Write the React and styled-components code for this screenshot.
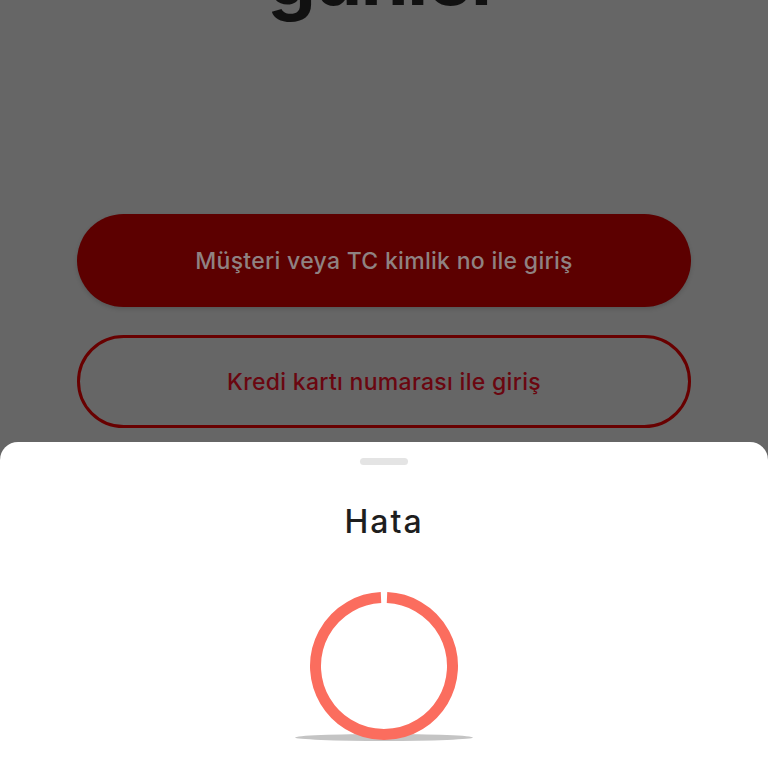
import React from 'react';
import styled, { createGlobalStyle } from 'styled-components';

const GlobalStyle = createGlobalStyle`
  html, body {
    margin: 0;
    padding: 0;
    background: #666666;
  }
  body {
    font-family: Inter, "Noto Sans", "Liberation Sans", sans-serif;
    overflow: hidden;
  }
`;

const Screen = styled.div`
  width: 768px;
  height: 768px;
  background: #666666;
  display: flex;
  flex-direction: column;
  align-items: center;
  overflow: hidden;
  position: relative;
`;

const BigTitle = styled.h1`
  margin: -61px 0 0;
  font-size: 77px;
  line-height: 76px;
  font-weight: 700;
  letter-spacing: -1.5px;
  color: #111111;
`;

const Actions = styled.div`
  width: 614px;
  margin-top: 199px;
  display: flex;
  flex-direction: column;
  gap: 28px;
`;

const PillButton = styled.button`
  height: 93px;
  width: 100%;
  border-radius: 47px;
  font-family: inherit;
  font-size: 23px;
  font-weight: 500;
  letter-spacing: 0.3px;
  display: flex;
  align-items: center;
  justify-content: center;
  background: ${(p) => (p.$outline ? 'transparent' : '#5c0000')};
  color: ${(p) => (p.$outline ? '#6a0610' : '#8f8282')};
  border: ${(p) => (p.$outline ? '3px solid #680000' : 'none')};
  box-shadow: ${(p) => (p.$outline ? 'none' : '0 2px 4px rgba(0,0,0,0.15)')};
`;

const Sheet = styled.div`
  position: absolute;
  left: 0;
  right: 0;
  bottom: 0;
  height: 326px;
  background: #ffffff;
  border-radius: 18px 18px 0 0;
  display: flex;
  flex-direction: column;
  align-items: center;
  padding-top: 16px;
  box-sizing: border-box;
`;

const Handle = styled.div`
  width: 48px;
  height: 7px;
  border-radius: 4px;
  background: #e4e4e4;
`;

const SheetTitle = styled.h2`
  margin: 37px 0 0;
  font-size: 32px;
  line-height: 40px;
  font-weight: 500;
  letter-spacing: 2px;
  color: #1e1e1e;
`;

const Loader = styled.div`
  position: relative;
  margin-top: 49px;
  width: 150px;
  height: 150px;
`;

const Shadow = styled.div`
  position: absolute;
  left: -14px;
  right: -14px;
  bottom: 0;
  height: 7px;
  border-radius: 50%;
  background: #c4c4c4;
  filter: blur(0.6px);
`;

const Ring = styled.svg`
  position: relative;
  display: block;
`;

export default function App() {
  return (
    <>
      <GlobalStyle />
      <Screen>
        <BigTitle>günler</BigTitle>
        <Actions>
          <PillButton>Müşteri veya TC kimlik no ile giriş</PillButton>
          <PillButton $outline>Kredi kartı numarası ile giriş</PillButton>
        </Actions>
        <Sheet>
          <Handle />
          <SheetTitle>Hata</SheetTitle>
          <Loader>
            <Shadow />
            <Ring width="150" height="150" viewBox="0 0 150 150">
              <path
                d="M 78 6.57 A 68.5 68.5 0 1 1 72 6.57"
                fill="none"
                stroke="#fb6d5e"
                strokeWidth="11"
              />
            </Ring>
          </Loader>
        </Sheet>
      </Screen>
    </>
  );
}
